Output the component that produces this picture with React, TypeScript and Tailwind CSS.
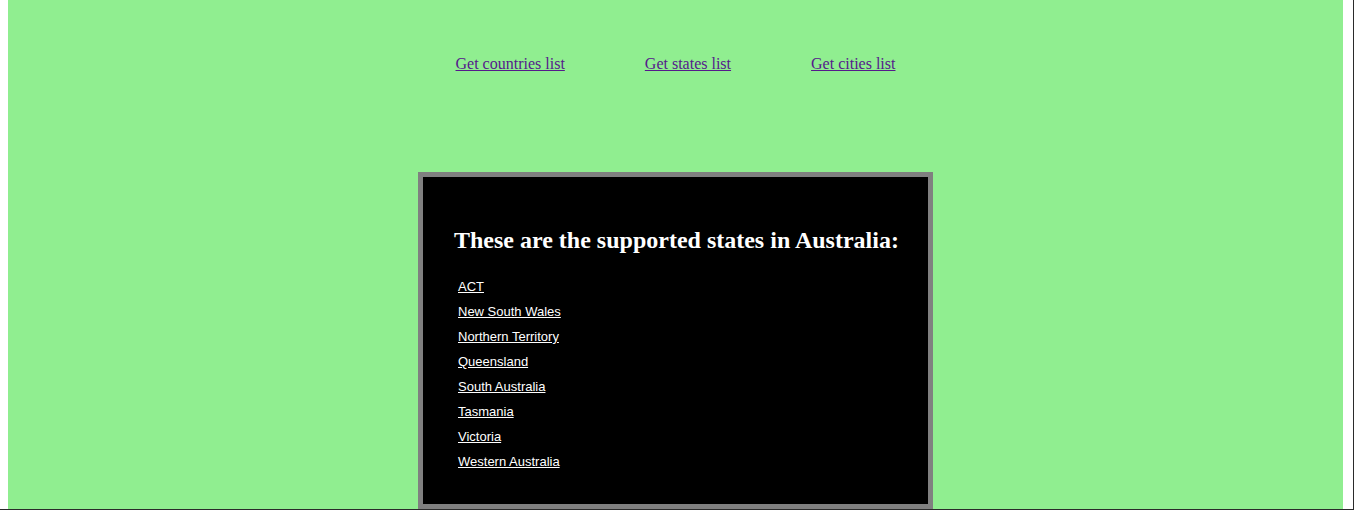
export default function App() {
  const states = [
    "ACT",
    "New South Wales",
    "Northern Territory",
    "Queensland",
    "South Australia",
    "Tasmania",
    "Victoria",
    "Western Australia",
  ];

  return (
    <div className="h-[510px] flex flex-col overflow-hidden bg-white">
      <div className="flex flex-1 min-h-0">
        <div className="w-2 shrink-0" />
        {/* Main page */}
        <main className="w-[1335px] shrink-0 bg-[#90ee90] flex flex-col items-center pt-[55px] overflow-hidden">
          <nav className="flex gap-[80px] font-['Liberation_Serif',serif] text-[16px] leading-[18px]">
            <a href="#" className="text-[#551a8b] underline">Get countries list</a>
            <a href="#" className="text-[#551a8b] underline">Get states list</a>
            <a href="#" className="text-[#551a8b] underline">Get cities list</a>
          </nav>

          <section className="mt-[99px] w-[515px] shrink-0 border-[5px] border-[#808080] bg-black pt-[49px] pb-[30px]">
            <h2 className="pl-[31px] font-['Liberation_Serif',serif] font-bold text-[24px] leading-[28px] text-white">
              These are the supported states in Australia:
            </h2>
            <ul className="mt-[20px] pl-[35px] font-['Liberation_Sans',Arial,sans-serif] text-[13px]">
              {states.map((s) => (
                <li key={s} className="h-[25px] leading-[25px]">
                  <a href="#" className="text-white underline">{s}</a>
                </li>
              ))}
            </ul>
          </section>
        </main>
        <div className="w-[10px] shrink-0 bg-white" />
        <div className="w-px shrink-0 bg-[#2b2b2b]" />
      </div>
      <div className="h-px shrink-0 bg-[#2b2b2b]" />
    </div>
  );
}
